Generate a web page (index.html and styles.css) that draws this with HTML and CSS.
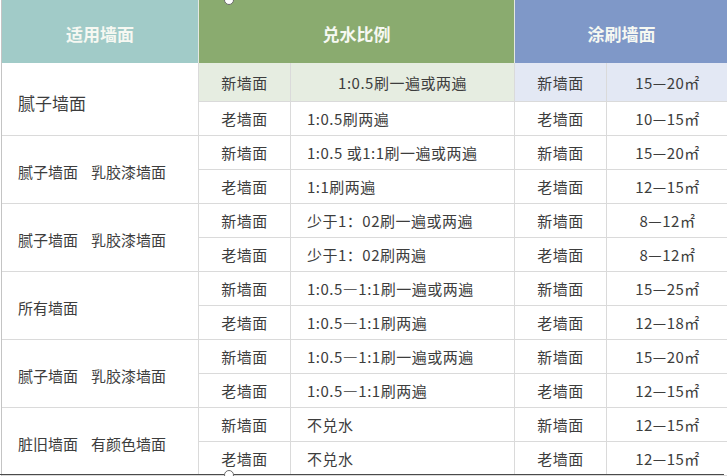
FILE: index.html
```html
<!DOCTYPE html>
<html lang="zh-CN">
<head>
<meta charset="utf-8">
<title>兑水比例</title>
<link rel="stylesheet" href="styles.css">
</head>
<body>
<div class="page">
  <div class="table">
    <div class="head">
      <div class="h h-teal">适用墙面</div>
      <div class="h h-green span2">兑水比例</div>
      <div class="h h-blue span2">涂刷墙面</div>
    </div>
    <div class="body">
      <div class="c wall big rs2">腻子墙面</div>
      <div class="c ctr tint-g">新墙面</div>
      <div class="c ctr tint-g">1:0.5刷一遍或两遍</div>
      <div class="c ctr tint-b">新墙面</div>
      <div class="c ctr tint-b">15—20㎡</div>
      <div class="c ctr">老墙面</div>
      <div class="c">1:0.5刷两遍</div>
      <div class="c ctr">老墙面</div>
      <div class="c ctr">10—15㎡</div>

      <div class="c wall rs2">腻子墙面<span class="sp"></span>乳胶漆墙面</div>
      <div class="c ctr">新墙面</div>
      <div class="c">1:0.5 或1:1刷一遍或两遍</div>
      <div class="c ctr">新墙面</div>
      <div class="c ctr">15—20㎡</div>
      <div class="c ctr">老墙面</div>
      <div class="c">1:1刷两遍</div>
      <div class="c ctr">老墙面</div>
      <div class="c ctr">12—15㎡</div>

      <div class="c wall rs2">腻子墙面<span class="sp"></span>乳胶漆墙面</div>
      <div class="c ctr">新墙面</div>
      <div class="c">少于1：02刷一遍或两遍</div>
      <div class="c ctr">新墙面</div>
      <div class="c ctr">8—12㎡</div>
      <div class="c ctr">老墙面</div>
      <div class="c">少于1：02刷两遍</div>
      <div class="c ctr">老墙面</div>
      <div class="c ctr">8—12㎡</div>

      <div class="c wall rs2">所有墙面</div>
      <div class="c ctr">新墙面</div>
      <div class="c">1:0.5—1:1刷一遍或两遍</div>
      <div class="c ctr">新墙面</div>
      <div class="c ctr">15—25㎡</div>
      <div class="c ctr">老墙面</div>
      <div class="c">1:0.5—1:1刷两遍</div>
      <div class="c ctr">老墙面</div>
      <div class="c ctr">12—18㎡</div>

      <div class="c wall rs2">腻子墙面<span class="sp"></span>乳胶漆墙面</div>
      <div class="c ctr">新墙面</div>
      <div class="c">1:0.5—1:1刷一遍或两遍</div>
      <div class="c ctr">新墙面</div>
      <div class="c ctr">15—20㎡</div>
      <div class="c ctr">老墙面</div>
      <div class="c">1:0.5—1:1刷两遍</div>
      <div class="c ctr">老墙面</div>
      <div class="c ctr">12—15㎡</div>

      <div class="c wall rs2">脏旧墙面<span class="sp"></span>有颜色墙面</div>
      <div class="c ctr">新墙面</div>
      <div class="c">不兑水</div>
      <div class="c ctr">新墙面</div>
      <div class="c ctr">12—15㎡</div>
      <div class="c ctr">老墙面</div>
      <div class="c">不兑水</div>
      <div class="c ctr">老墙面</div>
      <div class="c ctr">12—15㎡</div>
    </div>
  </div>
  <div class="frame">
    <span class="handle handle-top"></span>
    <span class="handle handle-bottom"></span>
  </div>
</div>
</body>
</html>
```

FILE: styles.css
```css
html, body {
  margin: 0;
  padding: 0;
  background: #ffffff;
  overflow: hidden;
}
.page {
  position: relative;
  width: 727px;
  height: 476px;
  overflow: hidden;
  font-family: "Noto Sans CJK SC", "Noto Sans", sans-serif;
  color: #3d3d3d;
}
.table {
  margin-left: 1px;
  border-left: 1px solid #c4c4c4;
  width: 726px;
}
.head, .body {
  display: grid;
  grid-template-columns: 196px 91px 223px 91px 121px;
  column-gap: 1px;
}
.head {
  background: #e4e8e2;
  height: 63px;
}
.body {
  background: #dadada;
  row-gap: 1px;
  grid-template-rows: 38px repeat(11, 33px);
  padding-bottom: 1px;
}
.h {
  display: flex;
  align-items: center;
  justify-content: center;
  padding-top: 3px;
  font-size: 17px;
  font-weight: 700;
  color: #f6f8f2;
}
.h-teal { background: #a1cbc8; }
.h-green { background: #8aab6f; }
.h-blue { background: #7f98c8; }
.span2 { grid-column: span 2; }
.c {
  background: #ffffff;
  display: flex;
  align-items: center;
  padding-left: 16px;
  font-size: 15px;
  letter-spacing: 0.5px;
  white-space: nowrap;
}
.ctr {
  justify-content: center;
  padding-left: 0;
}
.wall { padding-top: 3px; letter-spacing: 0; }
.big { font-size: 17px; padding-top: 6px; }
.rs2 { grid-row: span 2; }
.sp { display: inline-block; width: 13px; }
.tint-g { background: #e6ede1; }
.tint-b { background: #e3e8f4; }
.frame {
  position: absolute;
  left: 0;
  top: -1px;
  width: 724px;
  height: 475px;
  border-bottom: 1px solid #4a4a4a;
  pointer-events: none;
}
.handle {
  position: absolute;
  left: 224px;
  width: 8px;
  height: 8px;
  border-radius: 50%;
  background: #ffffff;
  border: 1px solid #6a6a6a;
}
.handle-top { top: -4px; }
.handle-bottom { bottom: -6px; }
```
